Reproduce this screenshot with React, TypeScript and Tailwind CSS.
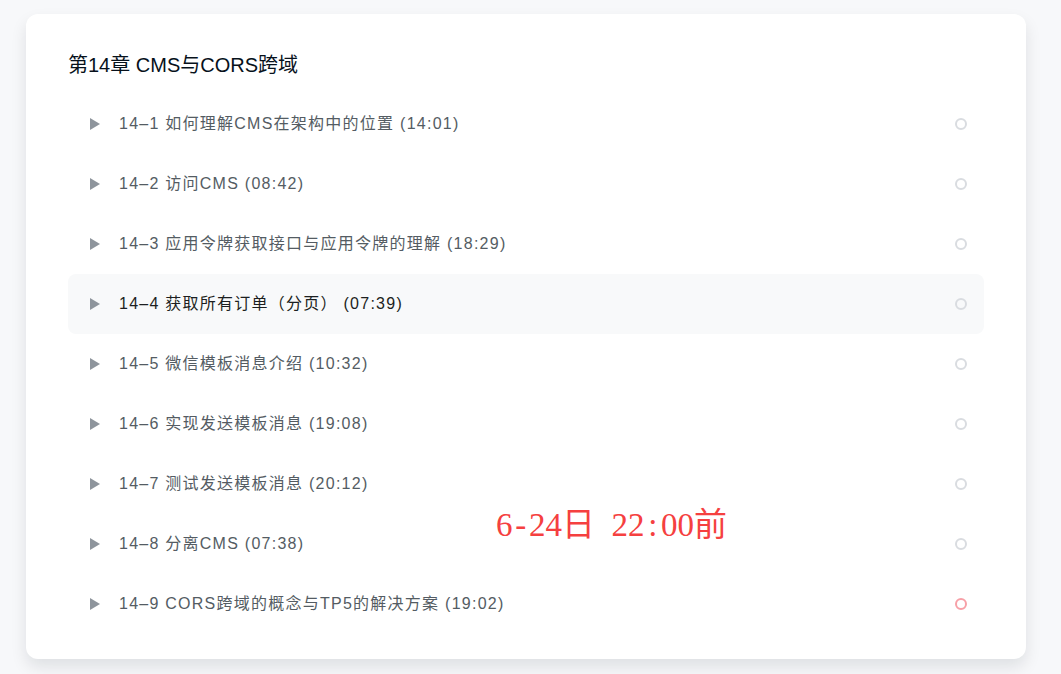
const lessons = [
  { id: "14–1", title: "如何理解CMS在架构中的位置", time: "(14:01)" },
  { id: "14–2", title: "访问CMS", time: "(08:42)" },
  { id: "14–3", title: "应用令牌获取接口与应用令牌的理解", time: "(18:29)" },
  { id: "14–4", title: "获取所有订单（分页）", time: "(07:39)", active: true },
  { id: "14–5", title: "微信模板消息介绍", time: "(10:32)" },
  { id: "14–6", title: "实现发送模板消息", time: "(19:08)" },
  { id: "14–7", title: "测试发送模板消息", time: "(20:12)" },
  { id: "14–8", title: "分离CMS", time: "(07:38)" },
  { id: "14–9", title: "CORS跨域的概念与TP5的解决方案", time: "(19:02)", last: true },
]

const font = { fontFamily: '"Liberation Sans", "Noto Sans CJK SC", sans-serif' }

// half-width / full-width cells, like a CJK serif system font
const note = ["6", "-", "2", "4", "日", " ", "2", "2", ":", "0", "0", "前"]

export default function App() {
  return (
    <div className="min-h-[674px] w-full bg-[#f7f8fa] pl-[26px] pt-[14px]" style={font}>
      <div className="relative w-[1000px] rounded-[12px] bg-white px-[42px] pb-[25px] pt-[36px] shadow-[0_8px_16px_rgba(7,17,27,0.1)]">
        <h2 className="text-[20px] leading-[30px] text-[#07111b]">第14章 CMS与CORS跨域</h2>
        <ul className="mt-[14px]">
          {lessons.map((l) => (
            <li
              key={l.id}
              className={
                "flex h-[60px] items-center rounded-[8px] pl-[22px] pr-[17px] " +
                (l.active ? "bg-[#f8f9fa] text-[#1c1f21]" : "text-[#545c63]")
              }
            >
              <svg width="10" height="12" viewBox="0 0 10 12" className="shrink-0">
                <path d="M0 0 L10 6 L0 12 Z" fill="#8e959c" />
              </svg>
              <span className="ml-[19px] text-[16px] leading-[24px] tracking-[1.25px]">
                {l.id} {l.title} {l.time}
              </span>
              <span
                className={
                  "ml-auto h-[12px] w-[12px] rounded-full border-2 " +
                  (l.last ? "border-[#f7a0a7]" : "border-[#d9dce0]")
                }
              />
            </li>
          ))}
        </ul>
        <div
          className="absolute left-[470px] top-[489px] flex text-[33px] leading-[44px] text-[#f54040]"
          style={{ fontFamily: '"Liberation Serif", "Noto Sans CJK SC", serif' }}
        >
          {note.map((c, i) => (
            <span
              key={i}
              className={
                "inline-block text-center " +
                (c === "日" || c === "前" ? "w-[33px]" : "w-[16.5px]")
              }
            >
              {c === " " ? "\u00a0" : c}
            </span>
          ))}
        </div>
      </div>
    </div>
  )
}
